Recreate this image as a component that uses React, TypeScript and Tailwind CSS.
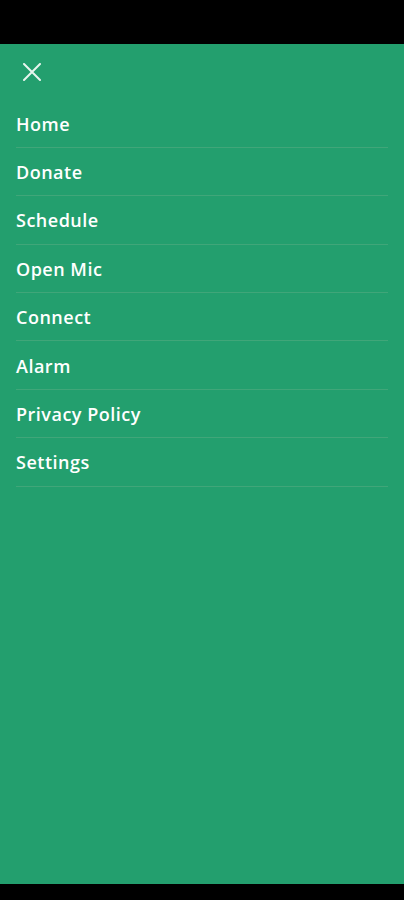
const ITEMS = ['Home', 'Donate', 'Schedule', 'Open Mic', 'Connect', 'Alarm', 'Privacy Policy', 'Settings'];

export default function App() {
  return (
    <div className="flex h-[900px] w-[404px] flex-col bg-black" style={{ fontFamily: '"Open Sans", "Noto Sans", sans-serif' }}>
      <div className="h-[44px] shrink-0 bg-black" />
      <div className="flex h-[840px] flex-col bg-[#239f6e]">
        {/* Close button */}
        <div className="flex h-[55.4px] items-center pl-[23px] pt-[1px]">
          <svg viewBox="0 0 18 18" className="h-[18px] w-[18px]" fill="none" stroke="#e8f5ee" strokeWidth={2} strokeLinecap="round">
            <path d="M1 1L17 17M17 1L1 17" />
          </svg>
        </div>

        {/* Menu */}
        <ul className="flex flex-col">
          {ITEMS.map((item) => (
            <li key={item} className="mx-4 flex h-[48.4px] items-center border-b border-[#40a679] pt-[2px]">
              <span className="text-[18px] font-semibold tracking-[0.5px] text-white">{item}</span>
            </li>
          ))}
        </ul>
      </div>
      <div className="h-[16px] shrink-0 bg-black" />
    </div>
  );
}
